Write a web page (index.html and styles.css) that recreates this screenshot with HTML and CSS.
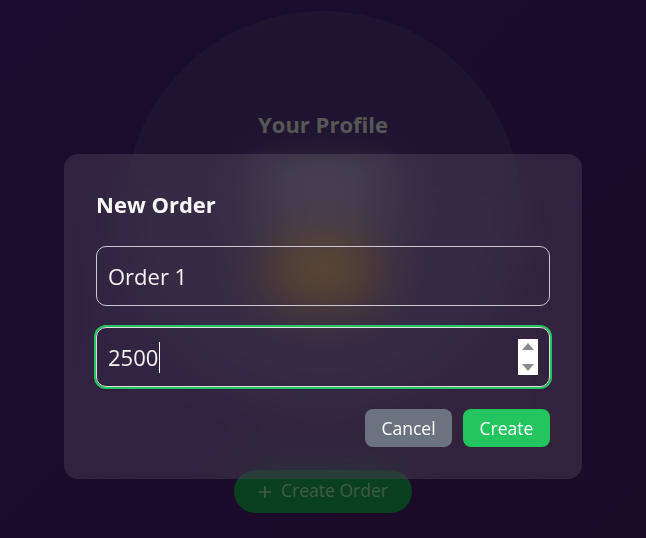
FILE: index.html
```html
<!DOCTYPE html>
<html lang="en">
<head>
<meta charset="utf-8">
<title>New Order</title>
<link rel="stylesheet" href="styles.css">
</head>
<body>
<main class="page">
  <section class="profile">
    <h1 class="profile-title">Your Profile</h1>
    <div class="profile-name"></div>
    <div class="profile-badge"></div>
  </section>
  <button class="create-order" type="button">
    <svg class="plus" viewBox="0 0 14 14" width="14" height="14"><path d="M7 1v12M1 7h12" stroke="currentColor" stroke-width="1.6" fill="none"/></svg>
    <span>Create Order</span>
  </button>
</main>

<div class="overlay">
  <div class="modal" role="dialog" aria-labelledby="modal-title">
    <h2 class="modal-title" id="modal-title">New Order</h2>
    <input class="field" type="text" value="Order 1" aria-label="Order name">
    <div class="field field-focused" aria-label="Amount">
      <span class="field-value">2500</span><span class="caret"></span>
      <span class="spinner"><span class="tri tri-up"></span><span class="tri tri-down"></span></span>
    </div>
    <div class="actions">
      <button class="btn btn-cancel" type="button">Cancel</button>
      <button class="btn btn-create" type="button">Create</button>
    </div>
  </div>
</div>
</body>
</html>
```
FILE: styles.css
```css
* { box-sizing: border-box; }

html, body {
  margin: 0;
  height: 100%;
}

body {
  font-family: "Open Sans", "Noto Sans", sans-serif;
  background: linear-gradient(135deg, #34195c 0%, #351755 60%, #38164f 100%);
  overflow: hidden;
}

.page {
  display: flex;
  flex-direction: column;
  align-items: center;
  min-height: 100%;
}

.profile {
  width: 396px;
  height: 396px;
  margin-top: 11px;
  border-radius: 50%;
  background: linear-gradient(160deg, #3d2a62 0%, #3f2660 100%);
  display: flex;
  flex-direction: column;
  align-items: center;
  padding-top: 98px;
}

.profile-title {
  margin: 0;
  font-size: 22px;
  line-height: 30px;
  font-weight: 700;
  color: #b0b0b0;
}

.profile-name {
  margin-top: 28px;
  width: 140px;
  height: 50px;
  border-radius: 25px;
  background: #77708c;
  filter: blur(22px);
}

.profile-badge {
  margin-top: 28px;
  width: 110px;
  height: 52px;
  border-radius: 26px;
  background: #b8841c;
  filter: blur(18px);
}

.create-order {
  margin-top: 63px;
  width: 178px;
  height: 43px;
  border: 0;
  border-radius: 22px;
  background: #15803d;
  color: rgba(255, 255, 255, 0.45);
  font-family: inherit;
  font-size: 17.5px;
  display: flex;
  align-items: center;
  justify-content: center;
  gap: 9px;
  padding: 0 0 3px;
}

.plus { display: block; margin-top: 3px; }

.overlay {
  position: fixed;
  inset: 0;
  background: rgba(0, 0, 0, 0.5);
  display: flex;
  justify-content: center;
  align-items: flex-start;
  padding-top: 154px;
}

.modal {
  width: 518px;
  padding: 32px;
  border-radius: 14px;
  background: rgba(255, 255, 255, 0.1);
  backdrop-filter: blur(24px);
  -webkit-backdrop-filter: blur(24px);
  display: flex;
  flex-direction: column;
}

.modal-title {
  margin: 0 0 24px;
  font-size: 22px;
  line-height: 36px;
  font-weight: 700;
  color: #f7f7f7;
}

.field {
  display: block;
  width: 100%;
  height: 60px;
  border: 1px solid #cdc8d3;
  border-radius: 10px;
  padding: 0 11px;
  background: transparent;
  color: #f4f4f4;
  font-family: inherit;
  font-size: 22px;
  outline: none;
}

.field-focused {
  margin-top: 21px;
  display: flex;
  align-items: center;
  border-color: #dedede;
  box-shadow: 0 0 0 2px #22c55e;
}

.caret {
  width: 1px;
  height: 31px;
  margin-left: 1px;
  background: #ffffff;
}

.spinner {
  margin-left: auto;
  width: 20px;
  height: 36px;
  background: #ffffff;
  display: flex;
  flex-direction: column;
  align-items: center;
  justify-content: space-between;
  padding: 4px 0;
}

.tri {
  width: 0;
  height: 0;
  border-left: 6px solid transparent;
  border-right: 6px solid transparent;
}

.tri-up { border-bottom: 7px solid #8c8c8c; }
.tri-down { border-top: 7px solid #8c8c8c; }

.actions {
  margin-top: 22px;
  display: flex;
  justify-content: flex-end;
  gap: 11px;
}

.btn {
  height: 38px;
  width: 87px;
  border: 0;
  border-radius: 8px;
  color: #ffffff;
  font-family: inherit;
  font-size: 17.5px;
  padding: 0;
}

.btn-cancel { background: #6b7280; }
.btn-create { background: #22c55e; }
```
